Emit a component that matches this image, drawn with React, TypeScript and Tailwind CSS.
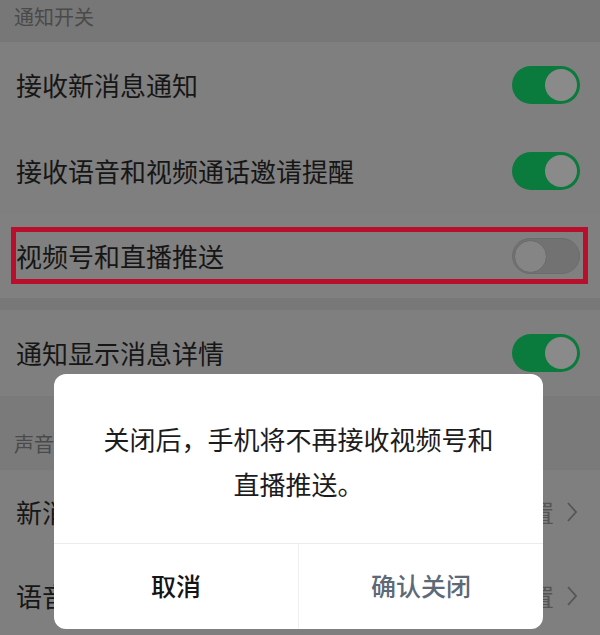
import React from "react";

const font = { fontFamily: '"Noto Sans CJK SC", "Noto Sans", sans-serif' };

function Toggle({ on }: { on: boolean }) {
  if (on) {
    return (
      <div className="w-[68px] h-[38px] rounded-full bg-[#0b7a3d] flex items-center justify-end pr-[3px] shrink-0">
        <div className="w-[32px] h-[32px] rounded-full bg-[#8a8a8a]" />
      </div>
    );
  }
  return (
    <div className="w-[68px] h-[36px] rounded-full bg-[#727272] border border-[#6c6c6c] flex items-center pl-[1px] shrink-0">
      <div className="w-[33px] h-[33px] rounded-full bg-[#858585] border-[1.5px] border-[#6a6a6a]" />
    </div>
  );
}

function Row({ label, on }: { label: string; on: boolean }) {
  return (
    <div className="h-[86px] flex items-center justify-between pl-[16px] pr-[20px] bg-[#7f7f7f]">
      <span className="text-[26px] text-[#161616] leading-none">{label}</span>
      <Toggle on={on} />
    </div>
  );
}

function Chevron() {
  return (
    <svg width="12" height="22" viewBox="0 0 12 22" fill="none">
      <polyline points="2,2 10,11 2,20" stroke="#555" strokeWidth="1.8" fill="none" />
    </svg>
  );
}

function LinkRow({ label, value }: { label: string; value: string }) {
  return (
    <div className="h-[84px] flex items-center justify-between pl-[16px] pr-[22px] bg-[#7f7f7f]">
      <span className="text-[26px] text-[#161616] leading-none">{label}</span>
      <div className="flex items-center gap-[12px]">
        <span className="text-[24px] text-[#555] leading-none">{value}</span>
        <Chevron />
      </div>
    </div>
  );
}

export default function App() {
  return (
    <div className="relative w-[600px] h-[635px] overflow-hidden bg-[#7f7f7f]" style={font}>
      <div className="h-[42px] bg-[#777777] pl-[14px] pt-[6px]">
        <span className="text-[20px] text-[#4a4a4a] leading-none">通知开关</span>
      </div>
      <Row label="接收新消息通知" on />
      <Row label="接收语音和视频通话邀请提醒" on />
      <div className="relative h-[84px] flex items-center justify-between pl-[16px] pr-[20px] bg-[#808080]">
        <span className="text-[26px] text-[#161616] leading-none">视频号和直播推送</span>
        <Toggle on={false} />
        <div className="absolute left-[11px] right-[12px] top-[13px] h-[57px] border-[5px] border-[#b8102c] pointer-events-none" />
      </div>
      <div className="h-[12px] bg-[#787878]" />
      <Row label="通知显示消息详情" on />
      <div className="h-[74px] bg-[#7a7a7a] pl-[14px] pt-[37px]">
        <span className="text-[20px] text-[#4a4a4a] leading-none">声音提醒</span>
      </div>
      <LinkRow label="新消息提示音" value="设置" />
      <LinkRow label="语音提示音" value="设置" />

      <div className="absolute left-[54px] top-[374px] w-[489px] h-[255px] bg-white rounded-[12px] flex flex-col">
        <div className="h-[169px] pt-[42px] text-center text-[26px] leading-[45px] text-[#1c1c1c]">
          <div>关闭后，手机将不再接收视频号和</div>
          <div>直播推送。</div>
        </div>
        <div className="h-px bg-[#ececec]" />
        <div className="flex-1 flex">
          <div className="flex-1 flex items-center justify-center text-[25px] font-medium text-[#151515] pb-[2px]">
            取消
          </div>
          <div className="w-px bg-[#f0f0f0]" />
          <div className="flex-1 flex items-center justify-center text-[25px] font-medium text-[#5d6977] pb-[2px]">
            确认关闭
          </div>
        </div>
      </div>
    </div>
  );
}
